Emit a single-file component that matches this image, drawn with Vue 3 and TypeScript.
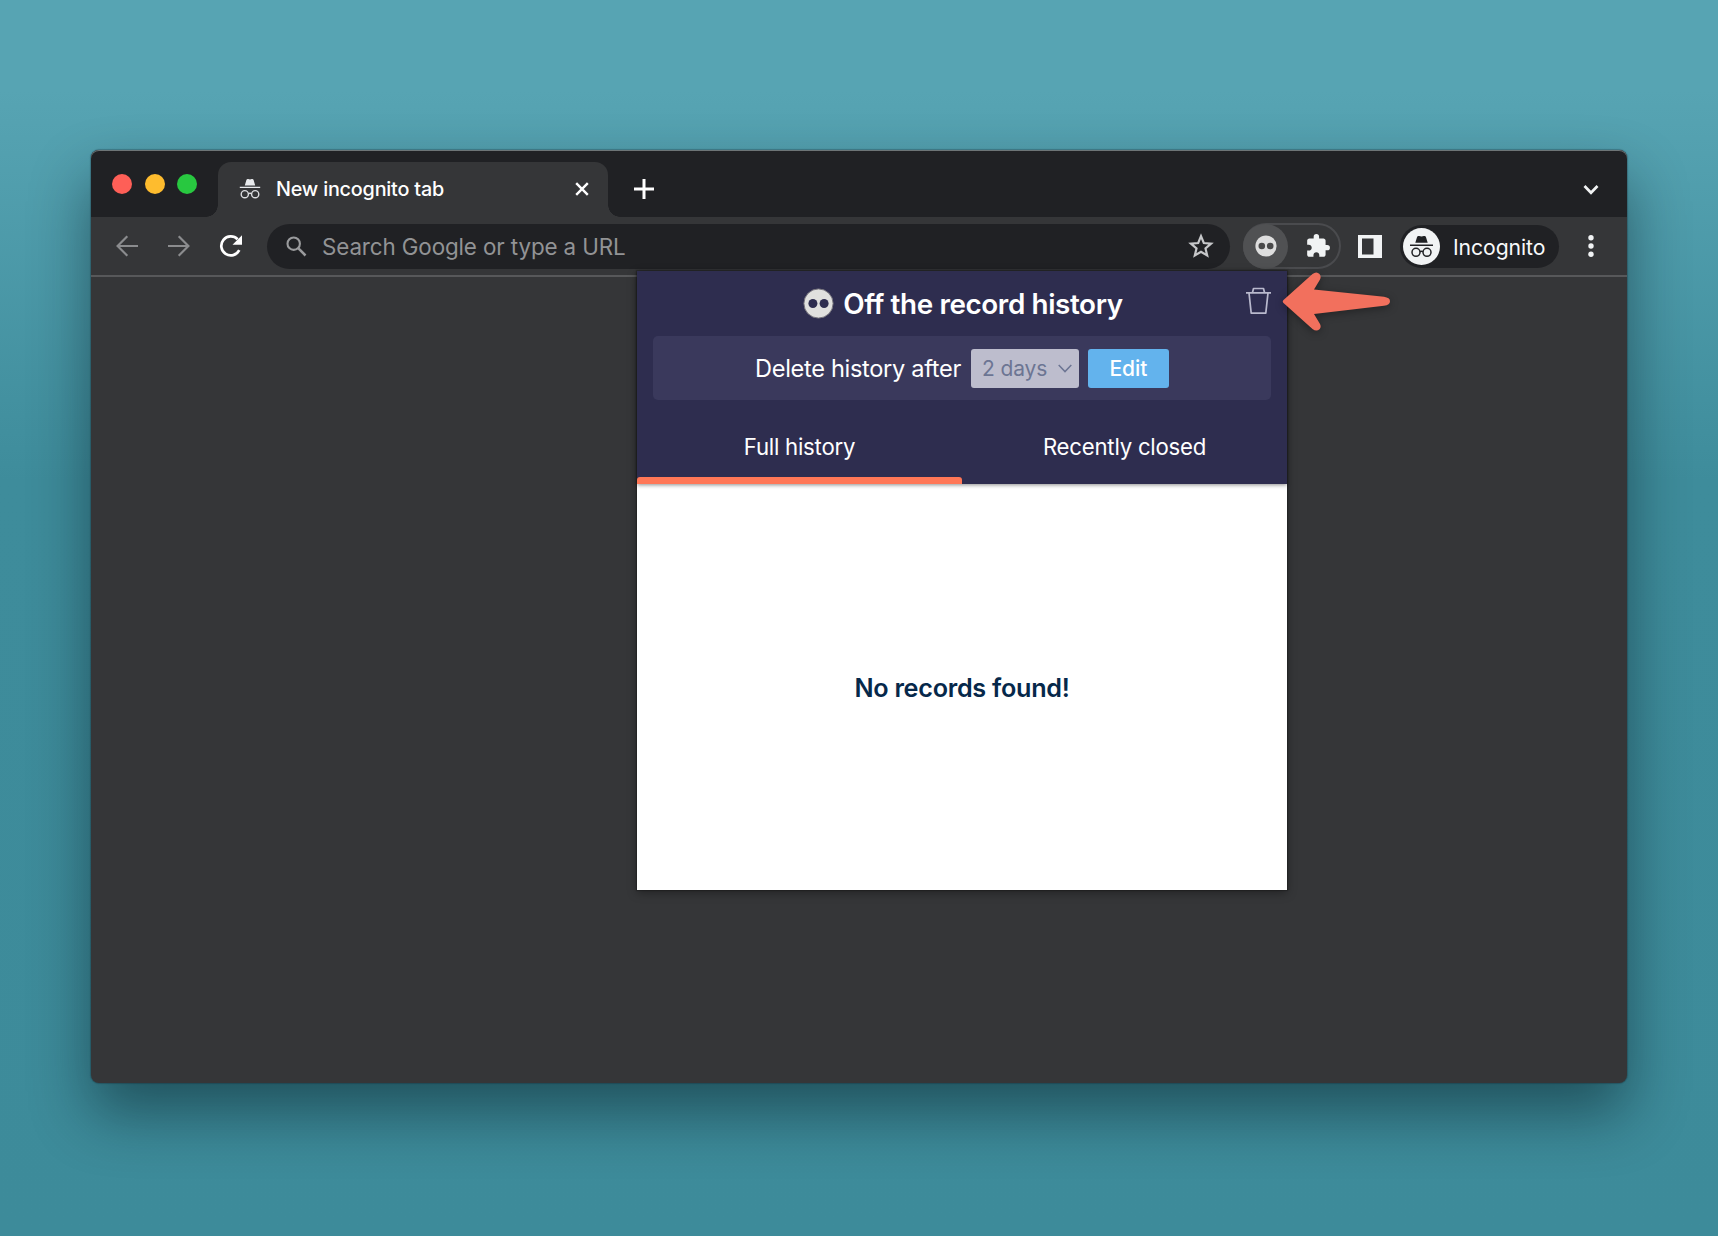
<script setup lang="ts">
import { ref } from 'vue'

const lights = ['#fe5f57', '#febc2e', '#28c840']
const tabs = ['Full history', 'Recently closed']
const active = ref(0)
</script>

<template>
  <main class="backdrop">
    <section class="window">
      <header class="strip">
        <div class="lights">
          <span v-for="c in lights" :key="c" class="light" :style="{ background: c }"></span>
        </div>
        <div class="tab">
          <svg class="tab-icon" width="22" height="22" viewBox="0 0 22 22">
            <path fill="#e8eaed" d="M5.800 7.500 7.400 2q.5-1.500 1.900-1l1.700.4 1.700-.4q1.400-.5 1.900 1l1.600 5.500zM.8 8.800h20.400v1.100H.8z" />
            <g fill="none" stroke="#dcdde0" stroke-width="1.400">
              <circle cx="5.800" cy="16.200" r="3.600" /><circle cx="16.200" cy="16.200" r="3.600" /><path d="M9.300 15.700q1.700-1 3.400 0" />
            </g>
          </svg>
          <span class="tab-title">New incognito tab</span>
          <svg class="close" width="14" height="14" viewBox="0 0 14 14"><path d="M1.200 1.200 12.800 12.800M12.800 1.200 1.200 12.800" stroke="#fff" stroke-width="2.400" /></svg>
        </div>
        <svg class="plus" width="20" height="20" viewBox="0 0 20 20"><path d="M10 0v20M0 10h20" stroke="#fff" stroke-width="3" /></svg>
        <svg class="chev" width="16" height="12" viewBox="0 0 16 12"><path d="M1.500 2 8 8.700 14.500 2" fill="none" stroke="#f1f3f4" stroke-width="2.700" /></svg>
      </header>

      <nav class="toolbar">
        <svg class="nav" width="22" height="22" viewBox="0 0 22 22"><path d="M22 11H1.800M11.300 1.300 1.600 11l9.700 9.700" fill="none" stroke="#8b8c8e" stroke-width="2.200" /></svg>
        <svg class="nav" width="22" height="22" viewBox="0 0 22 22"><path d="M0 11h20.200M10.700 1.300 20.400 11l-9.700 9.700" fill="none" stroke="#8b8c8e" stroke-width="2.200" /></svg>
        <svg class="reload" width="24" height="24" viewBox="0 0 24 24">
          <path d="M20.300 16.200A9.500 9.500 0 1 1 18.600 5.300" fill="none" stroke="#fff" stroke-width="2.700" />
          <path d="M23 1.300v9.500h-9.500z" fill="#fff" />
        </svg>
        <div class="omnibox">
          <svg width="21" height="21" viewBox="0 0 21 21"><circle cx="7.700" cy="7.700" r="6.200" fill="none" stroke="#9a9b9d" stroke-width="2.100" /><path d="m12.200 12.200 7.300 7.300" stroke="#9a9b9d" stroke-width="2.500" /></svg>
          <span class="placeholder">Search Google or type a URL</span>
          <svg class="star" width="26" height="26" viewBox="0 0 26 26"><path d="m13 3.200 2.800 6.800 7.300.6-5.600 4.800 1.700 7.100-6.200-3.800-6.200 3.800 1.700-7.100-5.600-4.800 7.300-.6z" fill="none" stroke="#c6c7c9" stroke-width="2.200" /></svg>
        </div>
        <div class="extensions">
          <span class="ext-active">
            <svg width="22" height="22" viewBox="0 0 22 22"><circle cx="11" cy="11" r="10.600" fill="#dedede" /><circle cx="6.800" cy="11" r="3.300" fill="#4a4a4b" /><circle cx="15.200" cy="11" r="3.300" fill="#4a4a4b" /></svg>
          </span>
          <svg class="puzzle" width="26" height="26" viewBox="0 0 24 24"><path fill="#f1f3f4" d="M20.500 11H19V7c0-1.100-.9-2-2-2h-4V3.500a2.500 2.500 0 0 0-5 0V5H4c-1.100 0-1.990.9-1.990 2v3.800H3.500c1.490 0 2.700 1.210 2.700 2.700s-1.210 2.700-2.700 2.700H2V20c0 1.100.9 2 2 2h3.800v-1.500c0-1.490 1.210-2.700 2.700-2.700s2.700 1.210 2.700 2.700V22H17c1.100 0 2-.9 2-2v-4h1.500a2.500 2.500 0 0 0 0-5z" /></svg>
        </div>
        <svg class="panel-icon" width="24" height="23" viewBox="0 0 24 23"><path fill="#f1f3f4" fill-rule="evenodd" d="M0 0h24v23H0zM4 3.500v16h11.500v-16z" /></svg>
        <div class="profile">
          <svg width="37" height="37" viewBox="0 0 37 37">
            <circle cx="18.500" cy="18.500" r="18.500" fill="#f1f3f4" />
            <path fill="#202124" d="m12.300 14.800 1.700-5.600q.5-1.700 2.100-1.200l2.400.6 2.400-.6q1.600-.5 2.100 1.200l1.700 5.600zM7 16.600h23v1.500H7z" />
            <g fill="none" stroke="#202124" stroke-width="1.500"><circle cx="13" cy="24.300" r="4" /><circle cx="24" cy="24.300" r="4" /><path d="M17 23.700q1.500-.9 3 0" /></g>
          </svg>
          <span>Incognito</span>
        </div>
        <svg class="dots" width="6" height="22" viewBox="0 0 6 22"><g fill="#f1f3f4"><circle cx="3" cy="2.800" r="2.700" /><circle cx="3" cy="11" r="2.700" /><circle cx="3" cy="19.200" r="2.700" /></g></svg>
      </nav>

      <article class="popup">
        <div class="head">
          <div class="title-row">
            <svg width="31" height="31" viewBox="0 0 31 31"><circle cx="15.500" cy="15.500" r="14.600" fill="#e0e0de" stroke="#77757d" stroke-width="1" /><circle cx="9.900" cy="15.500" r="4.500" fill="#2e2d4f" /><circle cx="21.100" cy="15.500" r="4.500" fill="#2e2d4f" /></svg>
            <h1>Off the record history</h1>
            <svg class="trash" width="25" height="28" viewBox="0 0 25 28"><path d="M0 5.800h25M3 5.800l2.200 20.400h14.600L22 5.800M6.500 5.500l1-4h10l1 4" fill="none" stroke="#b9b9cd" stroke-width="1.700" stroke-linejoin="round" /></svg>
          </div>
          <div class="setting">
            <span class="label">Delete history after</span>
            <span class="select">2 days
              <svg width="14" height="9" viewBox="0 0 14 9"><path d="M.7 1 7 7.600 13.300 1" fill="none" stroke="#6c7593" stroke-width="1.500" /></svg>
            </span>
            <button class="edit">Edit</button>
          </div>
          <div class="tabs">
            <button v-for="(t, i) in tabs" :key="t" :class="['ptab', { on: i === active }]" @click="active = i">{{ t }}</button>
          </div>
        </div>
        <div class="empty">No records found!</div>
      </article>

      <svg class="arrow" width="120" height="76" viewBox="0 0 120 76"><path d="M9.500 37 38.500 11Q42.500 8 45.500 11 47.500 13.500 46 16.500L40 26.500 110 33.800Q116 34.800 116 38.200 116 42 110 42.800L40 51 46 61Q47.500 64 45.500 66.200 42.500 69 38.500 66L9.500 40Q8 38.500 9.500 37Z" fill="#f2705d" /></svg>
    </section>
  </main>
</template>

<style>
body {
  margin: 0;
}
</style>

<style scoped>
* {
  box-sizing: border-box;
}
.backdrop {
  width: 1718px;
  height: 1236px;
  padding: 150px 91px 0;
  overflow: hidden;
  font-family: Inter, 'Liberation Sans', sans-serif;
  background: linear-gradient(#57a4b3 0, #57a4b3 90px, #3e8c9b 480px, #3d8b9a 100%);
}
.window {
  position: relative;
  width: 1536px;
  height: 933px;
  border-radius: 8px;
  background: #353638;
  box-shadow: 0 0 1px 1px rgba(20, 40, 50, 0.3), 0 30px 60px rgba(0, 20, 25, 0.47);
}
.strip {
  display: flex;
  height: 67px;
  border-radius: 8px 8px 0 0;
  background: #202124;
  box-shadow: inset 0 1px 0 #6d7476;
}
.lights {
  display: flex;
  gap: 12.500px;
  width: 127px;
  padding: 24px 0 0 21px;
}
.light {
  flex: none;
  width: 20px;
  height: 20px;
  border-radius: 50%;
}
.tab {
  position: relative;
  display: flex;
  align-items: center;
  width: 390px;
  height: 55px;
  margin-top: 12px;
  padding: 0 19px 1px 21px;
  border-radius: 13px 13px 0 0;
  background: #353638;
}
.tab::before,
.tab::after {
  content: '';
  position: absolute;
  bottom: 0;
  width: 12px;
  height: 12px;
}
.tab::before {
  left: -12px;
  background: radial-gradient(circle at 0 0, transparent 11.500px, #353638 12px);
}
.tab::after {
  right: -12px;
  background: radial-gradient(circle at 100% 0, transparent 11.500px, #353638 12px);
}
.tab-title {
  margin-left: 15px;
  color: #fff;
  font-size: 19.800px;
  font-weight: 450;
  letter-spacing: -0.200px;
}
.close {
  margin-left: auto;
}
.plus {
  margin: 29px 0 0 26px;
}
.chev {
  margin: 34px 28px 0 auto;
}
.toolbar {
  display: flex;
  align-items: center;
  height: 60px;
  padding-left: 25px;
  border-bottom: 2px solid #57585a;
}
.nav {
  margin-right: 30px;
}
.reload {
  margin: 0 24px 0 -1px;
}
.omnibox {
  display: flex;
  align-items: center;
  width: 963px;
  height: 45px;
  padding: 0 16px 0 19px;
  border-radius: 23px;
  background: #202124;
}
.placeholder {
  margin-left: 15px;
  color: #929395;
  font-size: 22.400px;
  letter-spacing: -0.120px;
}
.star {
  margin-left: auto;
}
.extensions {
  display: flex;
  align-items: center;
  width: 98px;
  height: 46px;
  margin-left: 13px;
  border: 2px solid #4a4b4e;
  border-radius: 23px;
}
.ext-active {
  display: flex;
  align-items: center;
  justify-content: center;
  width: 45px;
  height: 45px;
  margin-left: -2px;
  border-radius: 50%;
  background: #505153;
}
.puzzle {
  margin-left: 17px;
}
.panel-icon {
  margin-left: 17px;
}
.profile {
  display: flex;
  align-items: center;
  width: 159px;
  height: 43px;
  margin-left: 18px;
  padding-left: 3px;
  border-radius: 22px;
  background: #202124;
  color: #f8f9fa;
  font-size: 21.200px;
  letter-spacing: -0.080px;
}
.profile span {
  margin: 1px 0 0 13px;
}
.dots {
  margin-left: 29px;
}
.popup {
  position: absolute;
  left: 546px;
  top: 121px;
  display: flex;
  flex-direction: column;
  width: 650px;
  height: 619px;
  background: #fff;
  box-shadow: 0 0 1px 1px rgba(0, 0, 0, 0.2), 0 3px 9px rgba(0, 0, 0, 0.35);
}
.head {
  position: relative;
  height: 213px;
  background: #2e2d4f;
  box-shadow: 0 1px 4px rgba(0, 0, 0, 0.45);
}
.title-row {
  position: relative;
  display: flex;
  align-items: center;
  justify-content: center;
  gap: 9px;
  height: 65px;
  padding-left: 2px;
}
h1 {
  margin: 0;
  color: #fff;
  font-size: 27.800px;
  font-weight: 600;
  line-height: 32px;
  letter-spacing: -0.380px;
}
.trash {
  position: absolute;
  right: 16px;
  top: 16px;
}
.setting {
  display: flex;
  align-items: center;
  justify-content: center;
  width: 618px;
  height: 64px;
  margin: 0 auto;
  border-radius: 5px;
  background: #3a395c;
}
.label {
  margin-top: 1px;
  color: #fff;
  font-size: 23.600px;
  letter-spacing: -0.320px;
}
.select {
  display: flex;
  align-items: center;
  justify-content: space-between;
  width: 108px;
  height: 39px;
  margin: 0 9px 0 10px;
  padding: 0 7px 0 11px;
  border-radius: 3px;
  background: #bdbdcd;
  color: #6c7593;
  font-size: 21px;
  letter-spacing: -0.100px;
}
button {
  border: 0;
  padding: 0;
  font-family: inherit;
  color: #fff;
  background: none;
}
.edit {
  width: 81px;
  height: 39px;
  border-radius: 3px;
  background: #63b3ed;
  font-size: 21px;
  font-weight: 500;
}
.tabs {
  display: flex;
  height: 84px;
}
.ptab {
  flex: 1;
  padding-top: 15px;
  border-bottom: 7px solid transparent;
  font-size: 22.200px;
  letter-spacing: -0.230px;
}
.ptab.on {
  position: relative;
}
.ptab.on::after {
  content: '';
  position: absolute;
  left: 0;
  right: 0;
  bottom: -7px;
  height: 7px;
  border-radius: 3px 3px 0 0;
  background: #ff7757;
}
.empty {
  display: flex;
  flex: 1;
  align-items: center;
  justify-content: center;
  padding-top: 1px;
  color: #06284a;
  font-size: 25.200px;
  font-weight: 600;
  letter-spacing: -0.260px;
}
.arrow {
  position: absolute;
  left: 1183px;
  top: 113px;
  filter: drop-shadow(0 2px 4px rgba(0, 0, 0, 0.35));
}
</style>
